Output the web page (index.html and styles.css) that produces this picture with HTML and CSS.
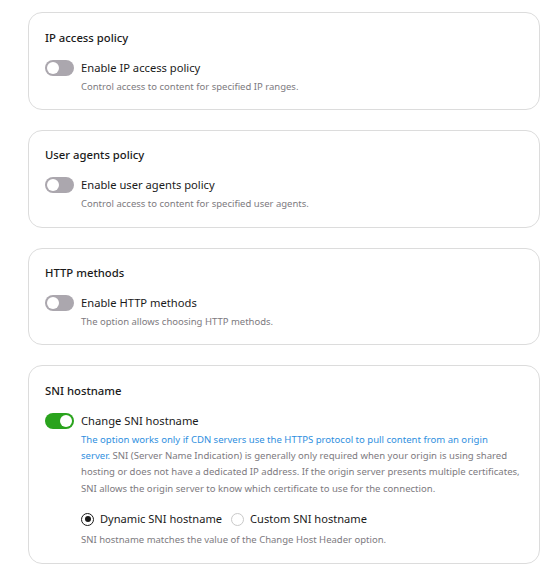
FILE: index.html
```html
<!DOCTYPE html>
<html>
<head>
<meta charset="utf-8">
<link rel="stylesheet" href="styles.css">
</head>
<body>
<div class="list">
  <section class="card">
    <h3 class="title">IP access policy</h3>
    <div class="row">
      <span class="toggle"><span class="knob"></span></span>
      <span class="label">Enable IP access policy</span>
    </div>
    <p class="desc">Control access to content for specified IP ranges.</p>
  </section>
  <section class="card">
    <h3 class="title">User agents policy</h3>
    <div class="row">
      <span class="toggle"><span class="knob"></span></span>
      <span class="label">Enable user agents policy</span>
    </div>
    <p class="desc">Control access to content for specified user agents.</p>
  </section>
  <section class="card">
    <h3 class="title">HTTP methods</h3>
    <div class="row">
      <span class="toggle"><span class="knob"></span></span>
      <span class="label">Enable HTTP methods</span>
    </div>
    <p class="desc">The option allows choosing HTTP methods.</p>
  </section>
  <section class="card sni">
    <h3 class="title">SNI hostname</h3>
    <div class="row">
      <span class="toggle on"><span class="knob"></span></span>
      <span class="label">Change SNI hostname</span>
    </div>
    <p class="desc long"><span class="blue">The option works only if CDN servers use the HTTPS protocol to pull content from an origin<br>server.</span> SNI (Server Name Indication) is generally only required when your origin is using shared<br>hosting or does not have a dedicated IP address. If the origin server presents multiple certificates,<br>SNI allows the origin server to know which certificate to use for the connection.</p>
    <div class="radios">
      <span class="radio-item"><span class="radio checked"></span>Dynamic SNI hostname</span>
      <span class="radio-item"><span class="radio"></span>Custom SNI hostname</span>
    </div>
    <p class="desc last">SNI hostname matches the value of the Change Host Header option.</p>
  </section>
</div>
</body>
</html>
```
FILE: styles.css
```css
* { box-sizing: border-box; }
body {
  margin: 0;
  background: #fff;
  font-family: "Noto Sans", "Open Sans", sans-serif;
  color: #1a1a1a;
}
.list {
  display: flex;
  flex-direction: column;
  gap: 20px;
  padding: 12px 20px 0 28px;
}
.card {
  border: 1px solid #dcdcdc;
  border-radius: 14px;
  padding: 15.5px 16px 14px 16px;
  width: 512px;
}
.card.sni { padding-bottom: 15px; }
.title {
  margin: 0;
  font-size: 11.3px;
  font-weight: 500;
  line-height: 18px;
}
.row {
  display: flex;
  align-items: center;
  gap: 7px;
  margin-top: 13px;
  height: 16px;
}
.toggle {
  width: 29px;
  height: 16px;
  border-radius: 8px;
  background: #aba7ae;
  position: relative;
  flex: none;
}
.toggle .knob {
  position: absolute;
  top: 2px;
  left: 2px;
  width: 12px;
  height: 12px;
  border-radius: 50%;
  background: #fff;
}
.toggle.on { background: #2aa31d; }
.toggle.on .knob { left: 15px; }
.label {
  font-size: 11.2px;
  line-height: 16px;
}
.desc {
  margin: 3px 0 0 36px;
  font-size: 9.5px;
  line-height: 16.3px;
  color: #7d7a80;
}
.desc.long {
  margin-top: 3px;
  font-size: 9.55px;
  white-space: nowrap;
}
.desc.last { margin-top: 5px; }
.blue { color: #2f8fe0; }
.radios {
  display: flex;
  gap: 9px;
  margin: 14px 0 0 36px;
  font-size: 11.1px;
  line-height: 16px;
}
.radio-item {
  display: flex;
  align-items: center;
  gap: 6px;
}
.radio {
  width: 13px;
  height: 13px;
  border-radius: 50%;
  border: 1px solid #c9c9c9;
  position: relative;
  flex: none;
}
.radio.checked { border-color: #1a1a1a; }
.radio.checked::after {
  content: "";
  position: absolute;
  top: 2.5px;
  left: 2.5px;
  width: 6px;
  height: 6px;
  border-radius: 50%;
  background: #1a1a1a;
}
```
